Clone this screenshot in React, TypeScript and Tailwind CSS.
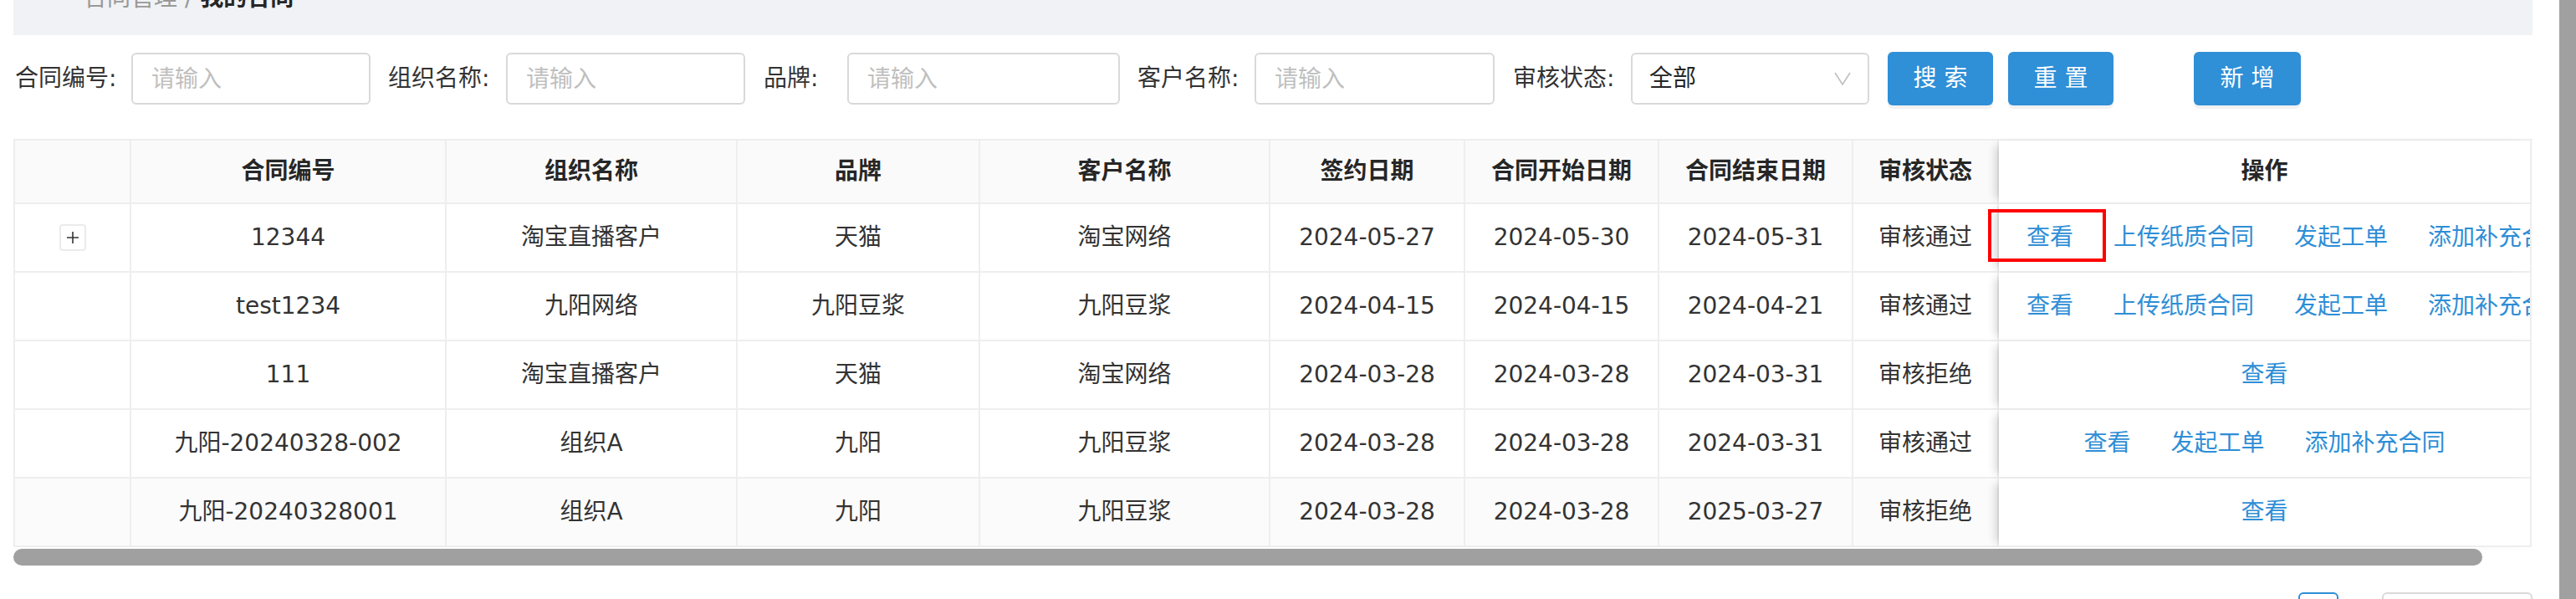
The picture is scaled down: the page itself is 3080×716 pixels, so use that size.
interface ContractRow {
  no: string;
  org: string;
  brand: string;
  customer: string;
  sign: string;
  start: string;
  end: string;
  status: string;
  actions: string[];
  expandable?: boolean;
}

const allActions = ["查看", "上传纸质合同", "发起工单", "添加补充合同"];

const rows: ContractRow[] = [
  { no: "12344", org: "淘宝直播客户", brand: "天猫", customer: "淘宝网络", sign: "2024-05-27", start: "2024-05-30", end: "2024-05-31", status: "审核通过", actions: allActions, expandable: true },
  { no: "test1234", org: "九阳网络", brand: "九阳豆浆", customer: "九阳豆浆", sign: "2024-04-15", start: "2024-04-15", end: "2024-04-21", status: "审核通过", actions: allActions },
  { no: "111", org: "淘宝直播客户", brand: "天猫", customer: "淘宝网络", sign: "2024-03-28", start: "2024-03-28", end: "2024-03-31", status: "审核拒绝", actions: ["查看"] },
  { no: "九阳-20240328-002", org: "组织A", brand: "九阳", customer: "九阳豆浆", sign: "2024-03-28", start: "2024-03-28", end: "2024-03-31", status: "审核通过", actions: ["查看", "发起工单", "添加补充合同"] },
  { no: "九阳-20240328001", org: "组织A", brand: "九阳", customer: "九阳豆浆", sign: "2024-03-28", start: "2024-03-28", end: "2025-03-27", status: "审核拒绝", actions: ["查看"] },
];

const headers = ["", "合同编号", "组织名称", "品牌", "客户名称", "签约日期", "合同开始日期", "合同结束日期", "审核状态"];

const gridCols =
  "grid grid-cols-[139px_377px_348px_290px_347px_233px_232px_232px_174px_637px]";
const cell = "flex items-center justify-center border-r-2 border-b-2 border-[#eeeeee]";
const fixedCell =
  "relative flex items-center overflow-hidden border-r-2 border-b-2 border-[#eeeeee] bg-white shadow-[-10px_0_10px_-6px_rgba(0,0,0,0.16)]";

function Field({ label, labelW, ml, inputMl, inputW }: { label: string; labelW: string; ml: string; inputMl: string; inputW: string }) {
  return (
    <>
      <span className={`${ml} ${labelW} shrink-0 whitespace-nowrap`}>{label}</span>
      <input
        placeholder="请输入"
        className={`${inputMl} ${inputW} h-[62px] shrink-0 rounded-[6px] border-2 border-[#d9d9d9] bg-white px-[22px] text-[28px] outline-none placeholder:text-[#bfbfbf]`}
      />
    </>
  );
}

function BlueButton({ text, ml, w }: { text: string; ml: string; w: string }) {
  return (
    <button className={`${ml} ${w} h-[64px] shrink-0 rounded-[6px] bg-[#2f8fd7] text-[28px] text-white shadow-[0_4px_0_rgba(0,0,0,0.05)]`}>
      {text}
    </button>
  );
}

export default function App() {
  return (
    <div className="flex h-[716px] w-[3080px] overflow-hidden bg-white font-['DejaVu_Sans','Noto_Sans_CJK_SC',sans-serif] text-[28px] text-[#333333]">
      <main className="min-w-0 flex-1 pl-[16px] pr-[32px]">
        {/* breadcrumb, mostly scrolled out of view */}
        <div className="-mt-[48px] h-[90px] bg-[#f0f2f5] pl-[84px] pt-[26px] leading-[40px]">
          <span className="text-[#999999]">合同管理 / </span>
          <span className="font-semibold text-[#262626]">我的合同</span>
        </div>

        {/* filters */}
        <div className="mt-[20px] flex h-[64px] items-center">
          <Field label="合同编号:" labelW="w-[121px]" ml="ml-[2px]" inputMl="ml-[18px]" inputW="w-[286px]" />
          <Field label="组织名称:" labelW="w-[121px]" ml="ml-[21px]" inputMl="ml-[20px]" inputW="w-[286px]" />
          <Field label="品牌:" labelW="w-[66px]" ml="ml-[22px]" inputMl="ml-[34px]" inputW="w-[326px]" />
          <Field label="客户名称:" labelW="w-[121px]" ml="ml-[21px]" inputMl="ml-[19px]" inputW="w-[287px]" />
          <span className="ml-[22px] w-[121px] shrink-0 whitespace-nowrap">审核状态:</span>
          <div className="ml-[20px] flex h-[62px] w-[285px] shrink-0 items-center justify-between rounded-[6px] border-2 border-[#d9d9d9] pl-[20px] pr-[20px] text-[#262626]">
            <span>全部</span>
            <svg width="20" height="16" viewBox="0 0 20 16" fill="none">
              <path d="M1 1l9 14 9-14" stroke="#bfbfbf" strokeWidth="1.6" />
            </svg>
          </div>
          <BlueButton text="搜 索" ml="ml-[22px]" w="w-[126px]" />
          <BlueButton text="重 置" ml="ml-[18px]" w="w-[126px]" />
          <BlueButton text="新 增" ml="ml-[96px]" w="w-[128px]" />
        </div>

        {/* table */}
        <div className="mt-[40px] border-l-2 border-t-2 border-[#eeeeee]">
          <div className={`${gridCols} h-[76px] bg-[#fafafa] font-semibold text-[#262626]`}>
            {headers.map((h, i) => (
              <div key={i} className={cell}>
                {h}
              </div>
            ))}
            <div className={`${fixedCell} justify-center bg-[#fafafa]`}>操作</div>
          </div>

          {rows.map((r, idx) => {
            const rowBg = idx === 4 ? "bg-[#fbfbfb]" : "bg-white";
            const values = [r.no, r.org, r.brand, r.customer, r.sign, r.start, r.end, r.status];
            return (
              <div key={r.no} className={`${gridCols} relative h-[82px]`}>
                <div className={`${cell} ${rowBg}`}>
                  {r.expandable && (
                    <span className="flex h-[32px] w-[32px] items-center justify-center rounded-[4px] border-2 border-[#ebebeb] bg-white">
                      <svg width="16" height="16" viewBox="0 0 16 16">
                        <path d="M8 1v14M1 8h14" stroke="#333" strokeWidth="1.6" />
                      </svg>
                    </span>
                  )}
                </div>
                {values.map((v, i) => (
                  <div key={i} className={`${cell} ${rowBg} whitespace-nowrap`}>
                    {v}
                  </div>
                ))}
                <div
                  className={`${fixedCell} gap-[48px] whitespace-nowrap text-[#2e8ed6] ${
                    r.actions.length > 3 ? "justify-start pl-[33px]" : "justify-center"
                  }`}
                >
                  {r.actions.map((a) => (
                    <span key={a} className="shrink-0">
                      {a}
                    </span>
                  ))}
                </div>
                {idx === 0 && (
                  <div className="absolute left-[2359px] top-[6px] h-[63px] w-[141px] border-[4px] border-[#ff0000]" />
                )}
              </div>
            );
          })}
        </div>

        {/* horizontal scroll bar */}
        <div className="mt-[2px] h-[20px] w-[2952px] rounded-full bg-[#a0a0a0]" />

        {/* pagination */}
        <div className="mt-[32px] flex justify-end">
          <div className="flex h-[56px] w-[48px] justify-center rounded-[6px] border-2 border-[#2e8ed6] pt-[8px] text-[#2e8ed6]">1</div>
          <div className="ml-[52px] h-[56px] w-[180px] rounded-[6px] border-2 border-[#d9d9d9]" />
        </div>
      </main>
      <div className="w-[20px] shrink-0 bg-[#a0a0a0]" />
    </div>
  );
}
